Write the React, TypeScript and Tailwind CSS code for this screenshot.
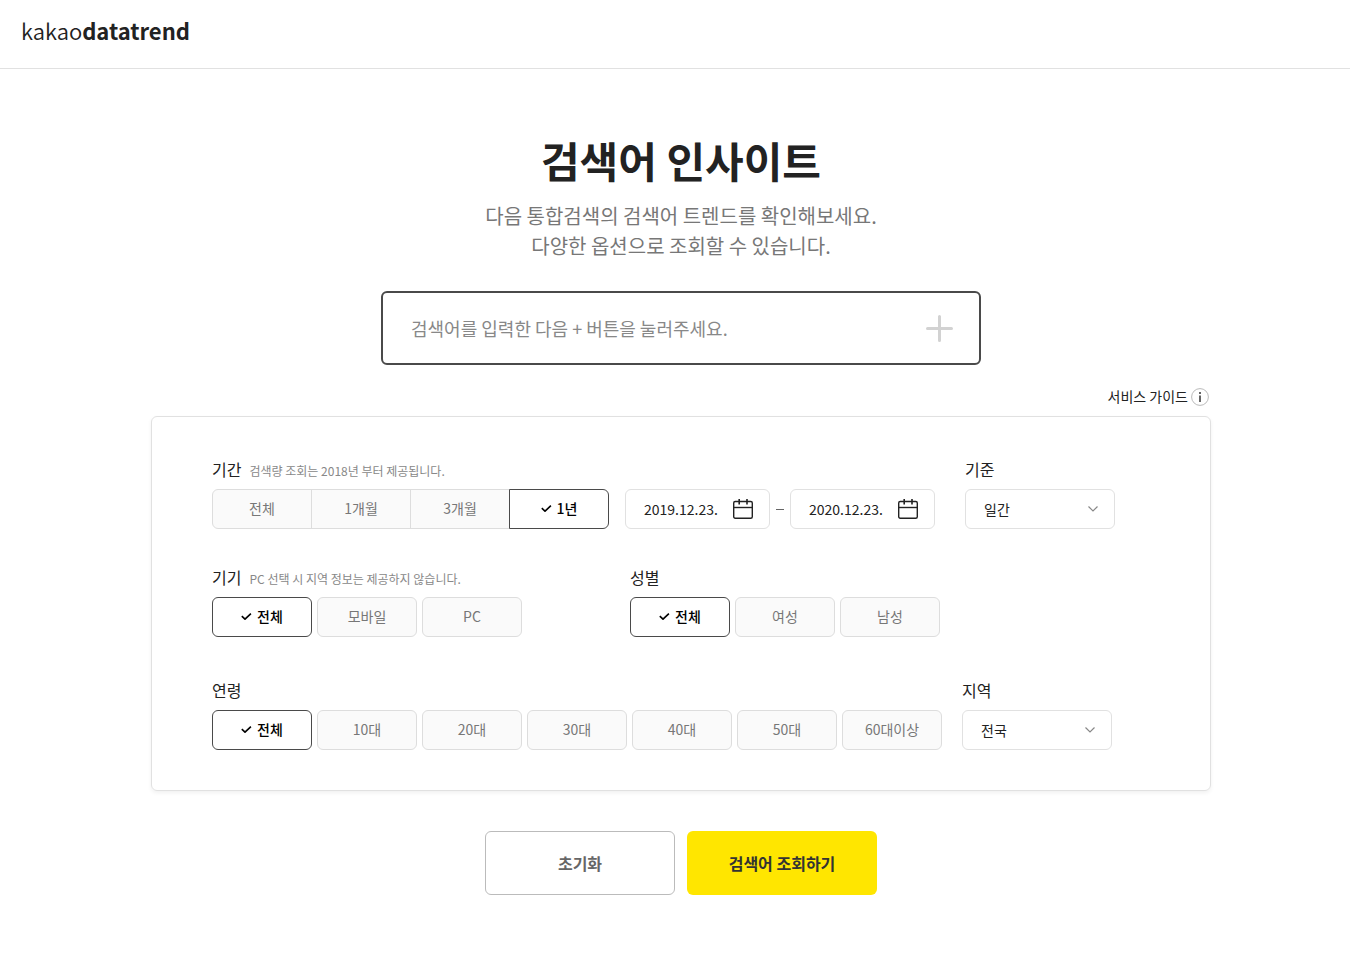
import { useState, type ReactNode } from 'react'
import clsx from 'clsx'

interface OptionGroupProps {
  name: string
  label: string
  hint?: string
  options: string[]
  initial: string
  joined?: boolean
}

interface SelectFieldProps {
  id: string
  label: string
  options: string[]
}

interface DateFieldProps {
  label: string
  initial: string
}

function CheckIcon() {
  return (
    <svg className="h-2 w-3" viewBox="0 0 12 8" fill="none" stroke="currentColor" strokeWidth="1.6" aria-hidden="true">
      <path d="M0.8 4.2 4 7.2 9.900 1.700" />
    </svg>
  )
}

function CalendarIcon() {
  return (
    <svg className="size-5" viewBox="0 0 20 20" fill="none" stroke="#222" strokeWidth="1.4" aria-hidden="true">
      <rect x="0.7" y="2.5" width="18.6" height="16.8" rx="1.5" />
      <path d="M0.7 8.5h18.6" />
      <path d="M6.2 0v5.5M14 0v5.5" strokeWidth="1.600" />
    </svg>
  )
}

function FieldTitle({ children, hint }: { children: ReactNode; hint?: string }) {
  return (
    <span className="flex h-6 items-baseline gap-2 text-base text-[#222]">
      {children}
      {hint && <span className="text-xs text-[#888]">{hint}</span>}
    </span>
  )
}

function OptionGroup({ name, label, hint, options, initial, joined }: OptionGroupProps) {
  const [selected, setSelected] = useState(initial)

  return (
    <fieldset>
      <legend className="mb-2">
        <FieldTitle hint={hint}>{label}</FieldTitle>
      </legend>
      <div className={clsx('flex', !joined && 'gap-[5px]')}>
        {options.map((option) => (
          <label
            key={option}
            className={clsx(
              'relative flex h-10 w-[100px] cursor-pointer items-center justify-center gap-1 border pb-0.5 text-sm',
              joined ? '-ml-px first:ml-0 first:rounded-l-md last:rounded-r-md' : 'rounded-md',
              option === selected
                ? 'z-10 border-[#4a4a4a] bg-white font-medium text-black'
                : 'border-[#ddd] bg-[#fafafa] text-[#777]',
            )}
          >
            <input
              type="radio"
              name={name}
              className="sr-only"
              checked={option === selected}
              onChange={() => setSelected(option)}
            />
            {option === selected && <CheckIcon />}
            {option}
          </label>
        ))}
      </div>
    </fieldset>
  )
}

function DateField({ label, initial }: DateFieldProps) {
  const [value, setValue] = useState(initial)

  return (
    <div className="flex h-10 w-[145px] items-center rounded-md border border-[#e1e1e1] pr-4 pl-[18px]">
      <input
        type="text"
        aria-label={label}
        className="min-w-0 flex-1 text-sm text-[#222] outline-none"
        value={value}
        onChange={(e) => setValue(e.target.value)}
      />
      <button type="button" aria-label={`${label} 선택`} className="cursor-pointer">
        <CalendarIcon />
      </button>
    </div>
  )
}

function SelectField({ id, label, options }: SelectFieldProps) {
  return (
    <div>
      <label htmlFor={id} className="mb-2 block">
        <FieldTitle>{label}</FieldTitle>
      </label>
      <div className="relative w-[150px]">
        <select
          id={id}
          className="h-10 w-full appearance-none rounded-md border border-[#e1e1e1] bg-white px-[18px] text-sm text-[#222]"
        >
          {options.map((option) => (
            <option key={option}>{option}</option>
          ))}
        </select>
        <svg
          className="pointer-events-none absolute top-4 right-4 h-2 w-3"
          viewBox="0 0 12 8"
          fill="none"
          stroke="#888"
          strokeWidth="1.2"
          aria-hidden="true"
        >
          <path d="M1.5 1.5 6 6l4.5-4.5" />
        </svg>
      </div>
    </div>
  )
}

export default function App() {
  const [keyword, setKeyword] = useState('')

  return (
    <div className="bg-white font-['Noto_Sans_CJK_KR',sans-serif] text-[#222]">
      <header className="border-b border-[#e1e1e1] px-[21px] pt-3 pb-5">
        <a href="#" className="block text-[22px] leading-9">
          <span className="font-[350]">kakao</span>
          <span className="font-bold">datatrend</span>
        </a>
      </header>

      <main className="flex flex-col items-center pt-[61px] pb-18 pl-3">
        <h1 className="text-[42px] leading-[60px] font-bold">검색어 인사이트</h1>
        <p className="mt-[11px] text-center text-xl leading-[30px] text-[#777]">
          다음 통합검색의 검색어 트렌드를 확인해보세요.
          <br />
          다양한 옵션으로 조회할 수 있습니다.
        </p>

        <form className="mt-[30px] flex h-[74px] w-[600px] items-center rounded-md border-2 border-[#4a4a4a] pr-[26px] pl-7">
          <input
            type="text"
            aria-label="검색어"
            className="min-w-0 flex-1 text-lg outline-none placeholder:text-[#888]"
            placeholder="검색어를 입력한 다음 + 버튼을 눌러주세요."
            value={keyword}
            onChange={(e) => setKeyword(e.target.value)}
          />
          <button type="button" aria-label="검색어 추가" className="cursor-pointer">
            <svg className="size-7" viewBox="0 0 28 28" stroke="#d2d2d2" strokeWidth="3" strokeLinecap="round">
              <path d="M2.5 14.5h24M14.5 2.5v24" />
            </svg>
          </button>
        </form>

        <div className="w-[1060px]">
          <div className="flex justify-end pt-[21px] pr-0.5 pb-[9px]">
            <a href="#" className="flex items-center gap-[3px] text-sm leading-[21px]">
              서비스 가이드
              <svg className="size-[18px]" viewBox="0 0 18 18" fill="none" aria-hidden="true">
                <circle cx="9" cy="9" r="8.4" stroke="#bbb" />
                <path d="M9 4v2M9 7.5v6.5" stroke="#666" strokeWidth="2" />
              </svg>
            </a>
          </div>

          <section className="rounded-md border border-[#e1e1e1] px-[60px] pt-10 pb-10 shadow-[0_2px_4px_rgba(0,0,0,0.06)]">
            <div className="flex items-end">
              <OptionGroup
                name="period"
                label="기간"
                hint="검색량 조회는 2018년 부터 제공됩니다."
                options={['전체', '1개월', '3개월', '1년']}
                initial="1년"
                joined
              />
              <div className="ml-4 flex items-center gap-1.5">
                <DateField label="시작일" initial="2019.12.23." />
                <span className="h-px w-2 bg-[#666]" />
                <DateField label="종료일" initial="2020.12.23." />
              </div>
              <div className="ml-[30px]">
                <SelectField id="unit" label="기준" options={['일간', '주간', '월간']} />
              </div>
            </div>

            <div className="mt-9 flex gap-[108px]">
              <OptionGroup
                name="device"
                label="기기"
                hint="PC 선택 시 지역 정보는 제공하지 않습니다."
                options={['전체', '모바일', 'PC']}
                initial="전체"
              />
              <OptionGroup name="gender" label="성별" options={['전체', '여성', '남성']} initial="전체" />
            </div>

            <div className="mt-[41px] flex gap-5">
              <OptionGroup
                name="age"
                label="연령"
                options={['전체', '10대', '20대', '30대', '40대', '50대', '60대이상']}
                initial="전체"
              />
              <SelectField id="region" label="지역" options={['전국', '서울', '경기', '부산']} />
            </div>
          </section>
        </div>

        <div className="mt-10 flex gap-3 font-bold">
          <button type="button" className="h-16 w-[190px] cursor-pointer rounded-md border border-[#bbb] text-[#666]">
            초기화
          </button>
          <button type="button" className="h-16 w-[190px] cursor-pointer rounded-md bg-[#ffe600] text-[#333]">
            검색어 조회하기
          </button>
        </div>
      </main>
    </div>
  )
}
